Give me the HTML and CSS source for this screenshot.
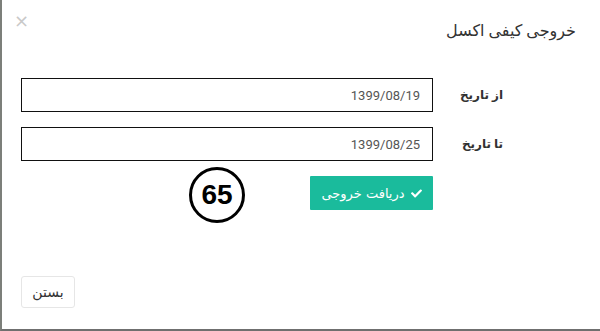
FILE: index.html
```html
<!DOCTYPE html>
<html lang="fa" dir="rtl">
<head>
  <meta charset="UTF-8">
  <meta name="viewport" content="width=device-width, initial-scale=1.0">
  <title>خروجی کیفی اکسل</title>
  <link rel="stylesheet" href="styles.css">
</head>
<body>

  <div class="modal" id="excelModal">
    <div class="modal-header">
      <h4 class="modal-title">خروجی کیفی اکسل</h4>
      <button class="close" id="closeX">&times;</button>
    </div>

    <div class="modal-body">
      <div class="form-row">
        <label for="fromDate">از تاریخ</label>
        <input type="text" id="fromDate" value="1399/08/19">
      </div>
      <div class="form-row">
        <label for="toDate">تا تاریخ</label>
        <input type="text" id="toDate" value="1399/08/25">
      </div>
      <div class="form-row action-row">
        <span class="label-space"></span>
        <button class="btn-success" id="getExcel">
          <svg class="check" viewBox="0 0 512 512"><path d="M173.9 439.4l-166.4-166.4c-10-10-10-26.2 0-36.2l36.2-36.2c10-10 26.2-10 36.2 0L192 312.7 432.1 72.6c10-10 26.2-10 36.2 0l36.2 36.2c10 10 10 26.2 0 36.2l-294.4 294.4c-10 10-26.2 10-36.2 0z"/></svg>
          دریافت خروجی
        </button>
        <span class="step-badge">65</span>
      </div>
    </div>

    <div class="modal-footer">
      <button class="btn-default" id="closeModal">بستن</button>
    </div>
  </div>

</body>
</html>
```

FILE: styles.css
```css
body {
  margin: 0;
  font-family: Roboto, "DejaVu Sans", sans-serif;
  background-color: #fff;
  overflow: hidden;
}

.modal {
  height: 331px;
  box-sizing: border-box;
  border-left: 2px solid #7c7f7a;
  border-bottom: 2px solid #6f6f6f;
  background-color: #fff;
  display: flex;
  flex-direction: column;
}

.modal-header {
  display: flex;
  justify-content: space-between;
  align-items: flex-start;
  padding: 19px 24px 0 12px;
  height: 41px;
}

.modal-title {
  margin: 0;
  font-size: 16px;
  font-weight: normal;
  line-height: 24px;
  color: #333;
}

.close {
  background: none;
  border: none;
  padding: 0;
  margin-top: -8px;
  font-family: "DejaVu Sans", sans-serif;
  font-size: 18px;
  line-height: 20px;
  color: #c9c9c9;
  cursor: pointer;
}

.modal-body {
  padding-top: 18px;
}

.form-row {
  display: flex;
  align-items: center;
  padding: 0 97px 0 19px;
  margin-bottom: 15px;
  position: relative;
}

label,
.label-space {
  width: 70px;
  flex-shrink: 0;
  font-size: 12px;
  font-weight: bold;
  color: #333;
}

input {
  flex: 1;
  height: 34px;
  box-sizing: border-box;
  border: 1px solid #111;
  padding: 0 12px;
  font-family: Roboto, sans-serif;
  font-size: 13px;
  color: #555;
  text-align: right;
  outline: none;
}

.btn-success {
  display: flex;
  align-items: center;
  gap: 6px;
  height: 34px;
  width: 123px;
  justify-content: center;
  background-color: #1abb9c;
  border: none;
  border-radius: 1px;
  color: #fff;
  font-family: "DejaVu Sans", sans-serif;
  font-size: 13px;
  cursor: pointer;
}

.check {
  width: 11px;
  height: 11px;
  fill: #fff;
}

.step-badge {
  position: absolute;
  left: 187px;
  top: -9px;
  width: 56px;
  height: 56px;
  box-sizing: border-box;
  border: 3px solid #000;
  border-radius: 50%;
  display: flex;
  align-items: center;
  justify-content: center;
  font-family: "Liberation Sans", Arial, sans-serif;
  font-size: 28px;
  font-weight: bold;
  color: #000;
}

.modal-footer {
  margin-top: auto;
  padding: 0 19px 21px;
  display: flex;
  justify-content: flex-end;
}

.btn-default {
  height: 32px;
  width: 54px;
  background-color: #fff;
  border: 1px solid #e6e6e6;
  border-radius: 3px;
  font-family: "DejaVu Sans", sans-serif;
  font-size: 14px;
  color: #333;
  cursor: pointer;
}
```
